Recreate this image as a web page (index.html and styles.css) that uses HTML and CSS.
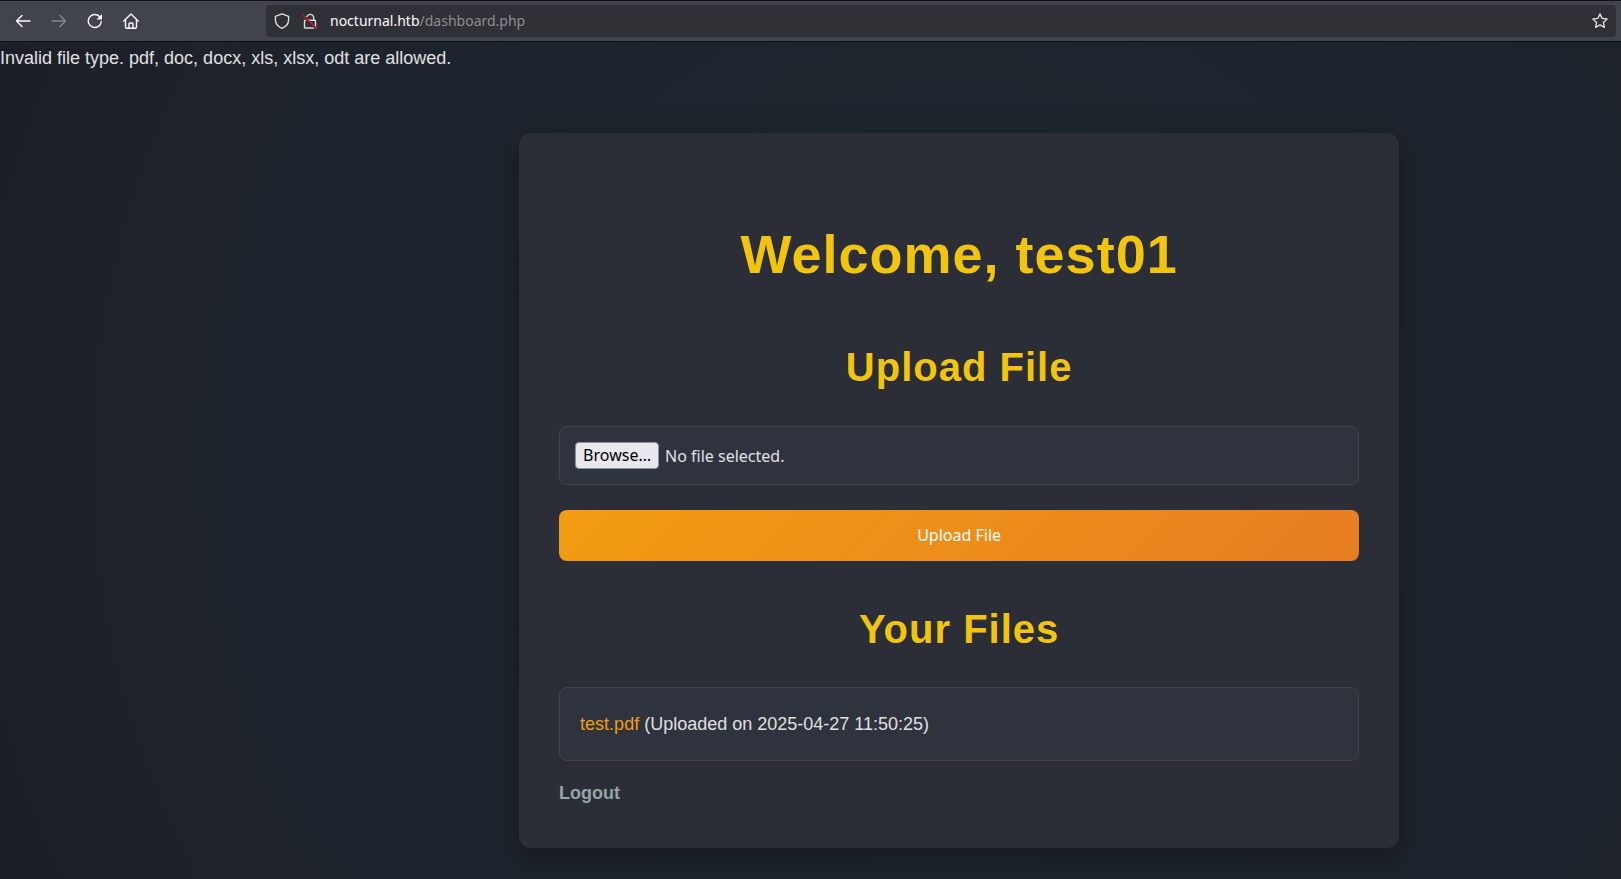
FILE: index.html
```html
<!DOCTYPE html>
<html lang="en">
<head>
<meta charset="utf-8">
<title>Dashboard</title>
<link rel="stylesheet" href="styles.css">
</head>
<body>
<header class="toolbar">
  <nav class="nav-buttons">
    <button class="icon-button" aria-label="Back"><svg viewBox="0 0 16 16"><path d="M15 8H1.500M7 2.500 1.500 8 7 13.500"/></svg></button>
    <button class="icon-button dim" aria-label="Forward"><svg viewBox="0 0 16 16"><path d="M1 8h13.500M9 2.500 14.500 8 9 13.500"/></svg></button>
    <button class="icon-button" aria-label="Reload"><svg viewBox="0 0 16 16"><path d="M14.300 8.500A6.500 6.500 0 1 1 12.500 3.500"/><path class="solid" d="M15 1v5.500H9.500z"/></svg></button>
    <button class="icon-button" aria-label="Home"><svg viewBox="0 0 16 16"><path d="M.8 8 8 1l7.200 7M2.500 6.700V14q0 1.200 1.200 1.200h8.600q1.200 0 1.200-1.200V6.700M6 15v-4q0-1 1-1h2q1 0 1 1v4"/></svg></button>
  </nav>
  <div class="address">
    <svg class="icon" viewBox="0 0 16 16"><path d="M8 .8 14.600 3.300v3.500q0 6-6.600 8.600Q1.400 12.800 1.400 6.800V3.300z"/></svg>
    <svg class="icon" viewBox="0 0 16 16"><path d="M5 3.500a3.500 3.500 0 0 1 6.700 1V7M3.300 7.300h9.400q.8 0 .8.800v6.100q0 .8-.8.800H3.300q-.8 0-.8-.8V8.100q0-.8.800-.8z"/><path class="gap" d="m1.500 4 12.500 12"/><path class="slash" d="m1.500 2.500 13 12.500"/></svg>
    <span class="url">nocturnal.htb<span class="path">/dashboard.php</span></span>
    <button class="bookmark" aria-label="Bookmark this page"><svg class="icon" viewBox="0 0 16 16"><path d="m8 .9 2.100 4.500 5 .6-3.700 3.400 1 4.900L8 11.900l-4.400 2.400 1-4.900L.9 6l5-.6z"/></svg></button>
  </div>
</header>
<div class="page">
  <p class="message">Invalid file type. pdf, doc, docx, xls, xlsx, odt are allowed.</p>
  <main class="card">
    <h1>Welcome, test01</h1>
    <h2>Upload File</h2>
    <form class="upload">
      <div class="file-field">
        <input class="file-input" type="file" id="file">
        <label class="browse" for="file">Browse…</label>
        <span>No file selected.</span>
      </div>
      <button class="submit" type="button">Upload File</button>
    </form>
    <h2>Your Files</h2>
    <ul class="files">
      <li><a href="#file">test.pdf</a> <span>(Uploaded on 2025-04-27 11:50:25)</span></li>
    </ul>
    <a class="logout" href="#logout">Logout</a>
  </main>
</div>
</body>
</html>
```
FILE: styles.css
```css
* { box-sizing: border-box; }
body {
  margin: 0;
  min-height: 100vh;
  display: flex;
  flex-direction: column;
  background: #1d1f28;
  color: #e0e0e0;
  font: 18px/30px "Liberation Sans", sans-serif;
}
button { font: inherit; border: 0; padding: 0; background: none; color: inherit; cursor: pointer; }
svg {
  display: block;
  width: 16px;
  height: 16px;
  fill: none;
  stroke: currentColor;
  stroke-width: 1.4;
  stroke-linecap: round;
  stroke-linejoin: round;
}
.solid { fill: currentColor; stroke: none; }
.slash { stroke: #e3103f; }
.gap { stroke: #303136; }
.toolbar {
  display: flex;
  height: 42px;
  padding: 4px 5px;
  background: #42444c;
  border-top: 1px solid #101116;
  border-bottom: 1px solid #101116;
  color: #fbfbfe;
}
.nav-buttons { display: flex; flex: 0 0 261px; align-items: center; }
.icon-button { display: grid; place-items: center; width: 36px; height: 32px; }
.dim { color: #86878c; }
.address {
  flex: 1;
  display: flex;
  align-items: center;
  gap: 12px;
  padding: 0 8px;
  border-radius: 4px;
  background: #303136;
  color: #dcdcdc;
}
.url { flex: 1; font: 14px/20px "Noto Sans", sans-serif; color: #fbfbfe; }
.path { color: #8d8d91; }
.page {
  flex: 1;
  display: flex;
  align-items: flex-start;
  padding: 1px 154px 28px 0;
  background: radial-gradient(circle at 59% 50%, #1c282f 0%, #1c262e 25%, #1e242d 50%, #1d232c 68%, #1d1f28 100%);
}
.message { margin: 0; white-space: nowrap; }
.card {
  flex: 0 1 880px;
  margin: 90px auto 0;
  padding: 40px;
  border-radius: 12px;
  background: #2b2d37;
  box-shadow: 0 8px 30px rgba(0, 0, 0, .3);
}
h1, h2 { margin: 0; text-align: center; color: #f1c40f; letter-spacing: 1px; }
h1 { margin-top: 36px; font-size: 54px; line-height: 90px; }
h2 { margin-top: 35px; font-size: 40px; line-height: 66px; }
.upload { display: flex; flex-direction: column; gap: 25px; margin-top: 26px; font-family: "Noto Sans", sans-serif; font-size: 16px; }
.file-field {
  position: relative;
  display: flex;
  align-items: center;
  gap: 6px;
  height: 59px;
  padding: 15px;
  border: 1px solid #444;
  border-radius: 8px;
  background: #2f333e;
}
.file-input { position: absolute; inset: 0; width: 100%; height: 100%; opacity: 0; }
.browse {
  padding: 0 7px;
  border: 1px solid #8f8f9d;
  border-radius: 4px;
  background: #e9e9ed;
  color: #000;
  line-height: 25px;
}
.submit {
  padding: 10px;
  line-height: 31px;
  border-radius: 8px;
  background: linear-gradient(135deg, #f39c12, #e67e22);
  color: #fff;
}
.files { list-style: none; margin: 25px 0 17px; padding: 0; }
.files li { padding: 21px 20px; border: 1px solid #444; border-radius: 8px; background: #2f333e; }
.files a { color: #f39c12; text-decoration: none; }
.logout { color: #95a5a6; font-weight: bold; text-decoration: none; }
```
